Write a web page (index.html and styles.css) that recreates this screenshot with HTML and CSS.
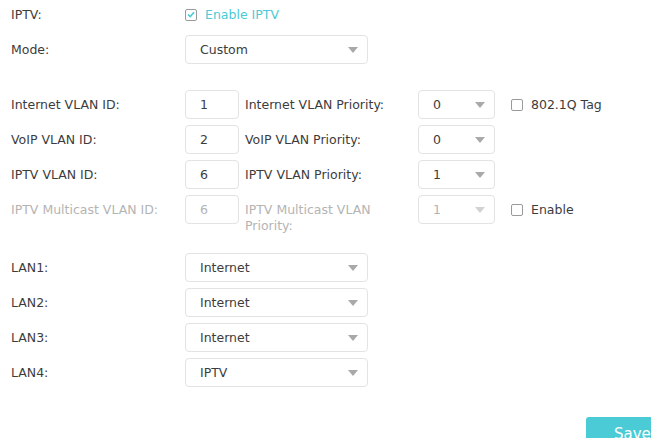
FILE: index.html
```html
<!DOCTYPE html>
<html lang="en">
  <head>
    <meta charset="UTF-8" />
    <title>IPTV Settings</title>
    <link rel="stylesheet" href="styles.css">
  </head>
  <body>
    <div class="panel">
      <div class="section">
        <div class="row">
          <span class="label">IPTV:</span>
          <label class="check on">
            <span class="box">
              <svg width="8" height="7" viewBox="0 0 8 7"><path d="M1 3.5 L3.2 5.6 L7 1.2" fill="none" stroke="#4acbd6" stroke-width="1.6"/></svg>
            </span>
            Enable IPTV
          </label>
        </div>
        <div class="row">
          <span class="label">Mode:</span>
          <div class="select wide"><span>Custom</span><i class="arrow"></i></div>
        </div>
      </div>

      <div class="section vlan">
        <div class="row">
          <span class="label">Internet VLAN ID:</span>
          <div class="input">1</div>
          <span class="label mid">Internet VLAN Priority:</span>
          <div class="select small"><span>0</span><i class="arrow"></i></div>
          <label class="check"><span class="box"></span>802.1Q Tag</label>
        </div>
        <div class="row">
          <span class="label">VoIP VLAN ID:</span>
          <div class="input">2</div>
          <span class="label mid">VoIP VLAN Priority:</span>
          <div class="select small"><span>0</span><i class="arrow"></i></div>
        </div>
        <div class="row">
          <span class="label">IPTV VLAN ID:</span>
          <div class="input">6</div>
          <span class="label mid">IPTV VLAN Priority:</span>
          <div class="select small"><span>1</span><i class="arrow"></i></div>
        </div>
        <div class="row disabled">
          <span class="label">IPTV Multicast VLAN ID:</span>
          <div class="input">6</div>
          <span class="label mid">IPTV Multicast VLAN Priority:</span>
          <div class="select small"><span>1</span><i class="arrow"></i></div>
          <label class="check"><span class="box"></span>Enable</label>
        </div>
      </div>

      <div class="section lan">
        <div class="row">
          <span class="label">LAN1:</span>
          <div class="select wide"><span>Internet</span><i class="arrow"></i></div>
        </div>
        <div class="row">
          <span class="label">LAN2:</span>
          <div class="select wide"><span>Internet</span><i class="arrow"></i></div>
        </div>
        <div class="row">
          <span class="label">LAN3:</span>
          <div class="select wide"><span>Internet</span><i class="arrow"></i></div>
        </div>
        <div class="row">
          <span class="label">LAN4:</span>
          <div class="select wide"><span>IPTV</span><i class="arrow"></i></div>
        </div>
      </div>

      <div class="actions">
        <button class="save">Save</button>
      </div>
    </div>
  </body>
</html>
```

FILE: styles.css
```css
body {
  margin: 0;
  font-family: "DejaVu Sans", sans-serif;
  font-size: 12.5px;
  color: #3c3c3c;
  background-color: #fff;
  overflow: hidden;
}

.panel {
  padding-left: 11px;
  display: flex;
  flex-direction: column;
}

.section {
  display: flex;
  flex-direction: column;
  gap: 6px;
}

.row {
  display: flex;
  align-items: flex-start;
  min-height: 29px;
}

.label {
  box-sizing: border-box;
  width: 174px;
  line-height: 16px;
  padding-top: 7px;
}

.label.mid {
  width: 173px;
  margin-left: 6px;
  padding-right: 10px;
}

.vlan {
  padding-top: 26px;
}

.lan {
  padding-top: 19px;
}

.input,
.select {
  box-sizing: border-box;
  height: 29px;
  border: 1px solid #e3e3e3;
  border-radius: 4px;
  background-color: #fff;
  padding-left: 14px;
  line-height: 27px;
}

.input {
  width: 54px;
}

.select {
  position: relative;
}

.select.wide {
  width: 183px;
}

.select.small {
  width: 77px;
}

.arrow {
  position: absolute;
  right: 9px;
  top: 11px;
  width: 0;
  height: 0;
  border-left: 5px solid transparent;
  border-right: 5px solid transparent;
  border-top: 6px solid #a9a9a9;
}

.check {
  display: flex;
  align-items: center;
  gap: 8px;
  height: 29px;
}

.row .select.small + .check {
  margin-left: 16px;
}

.check .box {
  box-sizing: border-box;
  width: 12px;
  height: 12px;
  border: 1px solid #9a9a9a;
  border-radius: 2px;
  display: flex;
  align-items: center;
  justify-content: center;
}

.check.on {
  color: #4acbd6;
}

.disabled .label,
.disabled .input,
.disabled .select {
  color: #b4b4b4;
}

.disabled .arrow {
  border-top-color: #d2d2d2;
}

.actions {
  display: flex;
  padding-left: 575px;
  padding-top: 30px;
}

.save {
  width: 90px;
  height: 32px;
  border: none;
  border-radius: 3px;
  background-color: #4acbd6;
  color: #fff;
  font-family: "DejaVu Sans", sans-serif;
  font-size: 15px;
  text-align: left;
  padding-left: 28px;
  padding-top: 2px;
}
```
